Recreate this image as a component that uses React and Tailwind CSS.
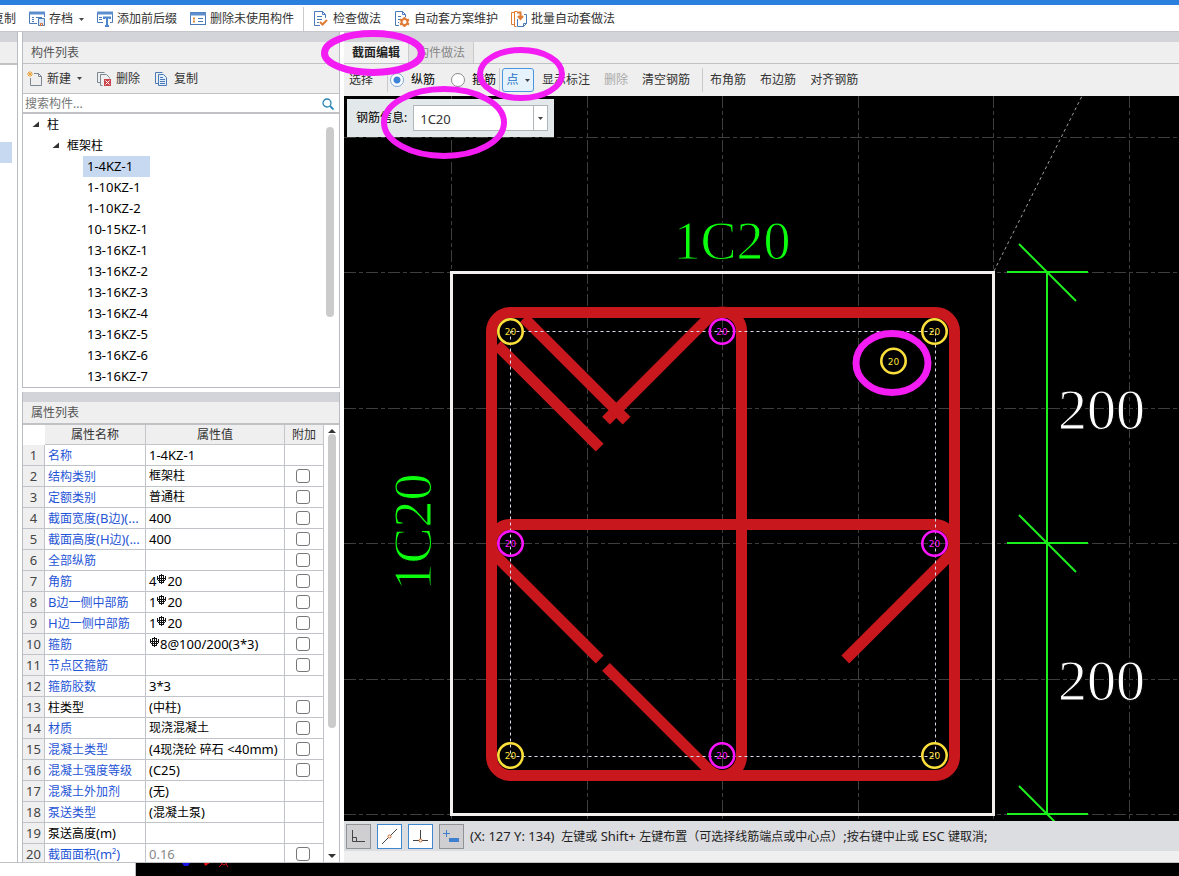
import { useState } from 'react'

const components = [
  '1-4KZ-1', '1-10KZ-1', '1-10KZ-2', '10-15KZ-1', '13-16KZ-1', '13-16KZ-2',
  '13-16KZ-3', '13-16KZ-4', '13-16KZ-5', '13-16KZ-6', '13-16KZ-7',
]

// "#" in a value stands for the rebar grade sign
const properties = [
  { name: '名称', value: '1-4KZ-1' },
  { name: '结构类别', value: '框架柱', extra: true },
  { name: '定额类别', value: '普通柱', extra: true },
  { name: '截面宽度(B边)(...', value: '400', extra: true },
  { name: '截面高度(H边)(...', value: '400', extra: true },
  { name: '全部纵筋', value: '', extra: true },
  { name: '角筋', value: '4#20', extra: true },
  { name: 'B边一侧中部筋', value: '1#20', extra: true },
  { name: 'H边一侧中部筋', value: '1#20', extra: true },
  { name: '箍筋', value: '#8@100/200(3*3)', extra: true },
  { name: '节点区箍筋', value: '', extra: true },
  { name: '箍筋胶数', value: '3*3' },
  { name: '柱类型', value: '(中柱)', extra: true, plain: true },
  { name: '材质', value: '现浇混凝土', extra: true },
  { name: '混凝土类型', value: '(4现浇砼 碎石 <40mm)', extra: true },
  { name: '混凝土强度等级', value: '(C25)', extra: true },
  { name: '混凝土外加剂', value: '(无)' },
  { name: '泵送类型', value: '(混凝土泵)' },
  { name: '泵送高度(m)', value: '', plain: true },
  { name: '截面面积(m²)', value: '0.16', extra: true, muted: true },
]

function GradeSign() {
  return (
    <svg width="11" height="12" viewBox="0 0 11 12" className="inline-block align-baseline" fill="none" stroke="#111" shapeRendering="crispEdges">
      <path d="M5.500 0V10M3 1.500H8M1.500 2V6M9.500 2V6M2 6.500H9M3.500 2V9M7.500 2V9M1 4.500H10M3 8.500H8" />
    </svg>
  )
}

// Latin runs are set one size larger than the Chinese ones
function Mixed({ children }) {
  return children.split(/(#|[\x20-\x22\x24-\x7e]+)/).map((part, i) => {
    if (part === '#') return <GradeSign key={i} />
    if (i % 2) return <span key={i} className="text-[13px] whitespace-pre">{part}</span>
    return part
  })
}

function Caret() {
  return (
    <svg width="5" height="3" viewBox="0 0 5 3" className="ml-[2px]">
      <path d="M0 0H5L2.5 3Z" fill="#444" />
    </svg>
  )
}

function Sep({ className }) {
  return <span className={`w-px h-6 bg-[#c8cacd] ${className}`} />
}

function Icon({ children }) {
  return (
    <svg width="16" height="16" viewBox="0 0 16 16" fill="none" stroke="#4a7ab8" className="shrink-0">
      {children}
    </svg>
  )
}

const SaveIcon = () => (
  <Icon>
    <path d="M.5 1V12.500H8M15.500 1V6" />
    <path d="M0 2H16" stroke="#5d8fce" strokeWidth="3" />
    <path d="M3 6.500H5M3 8.500H5M3 10.500H5M7 6.500H13" />
    <path d="M9.500 7.500H15.500V14.500H9.500Z" fill="#dce9f7" />
    <path d="M11.500 15V12.500H13.500V15" stroke="#e0703a" />
  </Icon>
)
const AffixIcon = () => (
  <Icon>
    <path d="M.5 1V11.500H6M15.500 1V11.500H13" />
    <path d="M0 2H16" stroke="#5d8fce" strokeWidth="3" />
    <path d="M2 6.500H5M2 8.500H5" />
    <path d="M7 8V6.500H13V8M10 6V14M8 15H12" strokeWidth="2" stroke="#4c86cc" />
  </Icon>
)
const UnusedIcon = () => (
  <Icon>
    <rect x=".5" y="1.500" width="15" height="12" />
    <path d="M0 3H16" stroke="#5d8fce" strokeWidth="3" />
    <path d="M3 7.500H5M3 10.500H5" stroke="#e08a3a" strokeWidth="2" />
    <path d="M8 7.500H13M8 10.500H13" />
  </Icon>
)
const CheckIcon = () => (
  <Icon>
    <path d="M7 14.500H1.500V.5H9.500L12.500 3.500V7M9.500 .5V3.500H12.500" />
    <path d="M4 5.500H9M4 8.500H9M4 11.500H6" />
    <path d="M7 11L9.500 13.500L14 9" stroke="#e07b35" strokeWidth="2" />
  </Icon>
)
const SchemeIcon = () => (
  <Icon>
    <path d="M5 14.500H1.500V.5H8.500L11.500 3.500V6M8.500 .5V3.500H11.500M4 5.500H7M4 8.500H6M4 11.500H5" />
    <circle cx="10.500" cy="11" r="3" stroke="#e07b35" strokeWidth="2" />
    <path d="M10.500 6V8M10.500 14V16M6 8.500L8 9.500M13 12.500L15 13.500M15 8.500L13 9.500M8 12.500L6 13.500" stroke="#e07b35" strokeWidth="2" />
  </Icon>
)
const BatchIcon = () => (
  <Icon>
    <path d="M3 13.500H.5V1.500H3M5.500 15.500H3.500V.500H6" stroke="#e07b35" />
    <path d="M6.500 8V15.500H12.500L15.500 12.500V3.500H13M12.500 15.500V12.500H15.500" />
    <path d="M6 1.500H9.500V7M7 5L9.500 8L12 5" stroke="#e07b35" strokeWidth="2" />
  </Icon>
)
const NewIcon = () => (
  <Icon>
    <path d="M3.500 7V14.500H14.500V5.500L11.500 2.500H7M11.500 2.500V5.500H14.500" stroke="#7d8791" />
    <path d="M3 0V6M0 3H6M1 1L5 5M5 1L1 5" stroke="#eda23a" />
  </Icon>
)
const DeleteIcon = () => (
  <Icon>
    <path d="M4 11.500H1.500V1.500H8.500M6.500 14.500H4.500V3.500H10.500L13.500 6.500V7.500" stroke="#7d8791" />
    <rect x="8" y="8" width="7" height="7" fill="#c9454b" stroke="none" />
    <path d="M9.500 9.500L13.500 13.500M13.500 9.500L9.500 13.500" stroke="#fff" />
  </Icon>
)
const CopyIcon = () => (
  <Icon>
    <path d="M4 12.500H1.500V1.500H8.500" />
    <path d="M4.500 3.500H9.500L12.500 6.500V14.500H4.500Z" fill="#e3eefb" />
    <path d="M6 6.500H9M6 8.500H11M6 10.500H11M6 12.500H11" />
  </Icon>
)

function ToolButton({ icon, caret, children, disabled, className = 'text-[#333]' }) {
  return (
    <button type="button" disabled={disabled} className={`flex items-center gap-1 whitespace-nowrap ${className}`}>
      {icon}
      {children}
      {caret && <Caret />}
    </button>
  )
}

function TopToolbar() {
  return (
    <header className="border-t-[5px] border-[#2b80de] bg-white shrink-0">
      <div className="h-[27px] pt-[2px] flex items-center gap-[13px] border-b border-[#c5c7cc] overflow-hidden">
        <ToolButton className="-ml-2 text-[#333]">复制</ToolButton>
        <ToolButton icon={<SaveIcon />} caret>存档</ToolButton>
        <ToolButton icon={<AffixIcon />}>添加前后缀</ToolButton>
        <ToolButton icon={<UnusedIcon />}>删除未使用构件</ToolButton>
        <Sep className="-mx-1" />
        <ToolButton icon={<CheckIcon />}>检查做法</ToolButton>
        <ToolButton icon={<SchemeIcon />}>自动套方案维护</ToolButton>
        <ToolButton icon={<BatchIcon />}>批量自动套做法</ToolButton>
      </div>
    </header>
  )
}

function Expander() {
  return (
    <svg width="8" height="7" viewBox="0 0 8 7">
      <path d="M7 .5V6H.5Z" fill="#333" />
    </svg>
  )
}

function ComponentList() {
  const [selected, setSelected] = useState('1-4KZ-1')

  return (
    <section className="h-[356px] shrink-0 flex flex-col border border-t-0 border-[#b9bcc2]">
      <div className="h-[10px] bg-[#d2d4da]" />
      <h2 className="h-[22px] px-2 pt-px flex items-center bg-[#efefef] border-b border-[#c0c2c6] text-[#555]">构件列表</h2>
      <div className="h-[30px] px-1 flex items-center gap-[14px] bg-[#efefef] border-b border-[#c0c2c6]">
        <ToolButton icon={<NewIcon />} caret>新建</ToolButton>
        <ToolButton icon={<DeleteIcon />}>删除</ToolButton>
        <ToolButton icon={<CopyIcon />}>复制</ToolButton>
      </div>
      <div className="h-5 pt-px flex items-center pl-[2px] pr-[5px] border-b-2 border-[#c0c2c6]">
        <input type="text" aria-label="搜索构件" placeholder="搜索构件..." className="flex-1 min-w-0 outline-none placeholder:text-[#777]" />
        <svg width="12" height="12" viewBox="0 0 12 12" fill="none" stroke="#2a86b8">
          <circle cx="5" cy="5" r="4" strokeWidth="1.3" />
          <path d="M8 8L11.500 11.500" strokeWidth="1.8" />
        </svg>
      </div>
      <div className="flex-1 min-h-0 flex justify-between overflow-hidden">
        <ul className="leading-[21px] text-black">
          <li>
            <div className="pl-[9px] flex items-center gap-[7px]"><Expander />柱</div>
            <ul>
              <li>
                <div className="pl-[29px] flex items-center gap-[7px]"><Expander />框架柱</div>
                <ul className="pl-[60px]">
                  {components.map((name) => (
                    <li key={name}>
                      <button
                        type="button"
                        onClick={() => setSelected(name)}
                        className={`block h-[21px] min-w-[67px] px-1 text-left text-[13px] ${name === selected ? 'bg-[#c7d9f0]' : ''}`}
                      >
                        {name}
                      </button>
                    </li>
                  ))}
                </ul>
              </li>
            </ul>
          </li>
        </ul>
        <div className="w-2 h-[190px] mt-[13px] mr-[5px] rounded-full bg-[#cbcbcb]" />
      </div>
    </section>
  )
}

function PropertyList() {
  return (
    <section className="flex-1 min-h-0 flex flex-col border-x border-[#b9bcc2]">
      <div className="h-[10px] shrink-0 bg-[#d2d4da]" />
      <h2 className="h-[23px] shrink-0 px-2 flex items-center bg-[#efefef] border-b-2 border-[#c0c2c6] text-[#555]">属性列表</h2>
      <div className="flex-1 min-h-0 flex overflow-hidden">
        <table className="w-[301px] table-fixed border-separate border-spacing-0 self-start">
          <colgroup>
            <col className="w-[22px]" />
            <col className="w-[101px]" />
            <col className="w-[139px]" />
            <col className="w-[39px]" />
          </colgroup>
          <thead>
            <tr className="h-5 text-[#333]">
              <td className="p-0" />
              <th className="p-0 pt-px font-normal bg-[#efefef] border-r border-b border-[#c4c6c9]">属性名称</th>
              <th className="p-0 pt-px font-normal bg-[#efefef] border-r border-b border-[#c4c6c9]">属性值</th>
              <th className="p-0 pt-px font-normal bg-[#efefef] border-r border-b border-[#c4c6c9]">附加</th>
            </tr>
          </thead>
          <tbody>
            {properties.map((row, i) => (
              <tr key={row.name} className="h-[21px]">
                <td className="p-0 text-center text-[13px] text-[#444] bg-[#efefef] border-r border-b border-[#c0c4c8]">{i + 1}</td>
                <td className={`p-0 pt-px pl-[3px] whitespace-nowrap overflow-hidden border-r border-b border-[#c0c4c8] ${row.plain ? 'text-black' : 'text-[#1f55d6]'}`}>
                  <Mixed>{row.name}</Mixed>
                </td>
                <td className={`p-0 pl-[3px] whitespace-nowrap overflow-hidden border-r border-b border-[#c0c4c8] ${row.muted ? 'text-[#888]' : 'text-black'}`}>
                  <Mixed>{row.value}</Mixed>
                </td>
                <td className="p-0 pr-[2px] border-r border-b border-[#c0c4c8]">
                  {row.extra && (
                    <input
                      type="checkbox"
                      aria-label={row.name}
                      className="block mx-auto size-[14px] appearance-none rounded-[3px] border border-[#777] bg-white checked:bg-[#2b80de]"
                    />
                  )}
                </td>
              </tr>
            ))}
          </tbody>
        </table>
        <div className="flex-1 flex flex-col items-center justify-between py-1">
          <svg width="8" height="4" viewBox="0 0 8 4"><path d="M0 4H8L4 0Z" fill="#333" /></svg>
          <div className="w-2 h-[294px] mt-px mb-auto rounded-full bg-[#cbcbcb]" />
          <svg width="8" height="4" viewBox="0 0 8 4"><path d="M0 0H8L4 4Z" fill="#333" /></svg>
        </div>
      </div>
    </section>
  )
}

function EditorToolbar() {
  const [kind, setKind] = useState('纵筋')

  return (
    <div className="h-8 shrink-0 pl-[5px] flex items-center gap-[14px] bg-[#efefef] text-[#222]">
      <ToolButton>选择</ToolButton>
      <Sep className="-mr-3" />
      <div className="flex gap-4">
        {['纵筋', '箍筋'].map((name) => (
          <label key={name} className="flex items-center gap-[7px] whitespace-nowrap text-black">
            <input
              type="radio"
              name="kind"
              checked={kind === name}
              onChange={() => setKind(name)}
              className="size-[14px] appearance-none rounded-full border border-[#8a8d91] bg-white checked:border-[#7aa7d8] checked:bg-[radial-gradient(circle,#3d84d6_3px,#fff_4px)]"
            />
            {name}
          </label>
        ))}
      </div>
      <Sep className="-ml-[11px] -mr-3" />
      <button type="button" className="w-8 h-6 -mr-[6px] shrink-0 flex items-center justify-center gap-1 rounded-[3px] border border-[#4a96dc] bg-[#e6f2fc] text-[#2273c8]">
        点
        <Caret />
      </button>
      <ToolButton>显示标注</ToolButton>
      <ToolButton disabled className="text-[#aaa]">删除</ToolButton>
      <ToolButton>清空钢筋</ToolButton>
      <Sep className="-ml-[2px] -mr-[7px]" />
      <ToolButton>布角筋</ToolButton>
      <ToolButton>布边筋</ToolButton>
      <ToolButton>对齐钢筋</ToolButton>
    </div>
  )
}

function Bar({ x, y, color }) {
  return (
    <g>
      <circle cx={x} cy={y} r="12.2" fill="none" stroke={color} strokeWidth="2.600" />
      <text x={x} y={y + 3.5} fill={color} fontSize="9" textAnchor="middle" fontFamily="DejaVu Sans, sans-serif">20</text>
    </g>
  )
}

const YELLOW = '#fbe03c'
const MAGENTA = '#ff14ff'

function SectionDrawing() {
  return (
    <svg viewBox="344 96 835 725" preserveAspectRatio="xMinYMin slice" className="block w-full h-full" fill="none">
      {/* axis grid */}
      <g stroke="#3e3e3e" strokeDasharray="12 3 4 3">
        {[451.5, 587.5, 722.5, 858.5, 993.5, 1129.5].map((x) => <path key={x} d={`M${x} 96V821`} />)}
        {[137.5, 272.5, 408.5, 543.5, 679.5, 814.5].map((y) => <path key={y} d={`M344 ${y}H1179`} />)}
      </g>
      <path d="M994 271L1082 96" stroke="#a0a0a0" strokeDasharray="3 3" />
      <rect x="451.5" y="272.5" width="542" height="542" stroke="#f4f0f0" strokeWidth="3" />

      {/* stirrups and their hooks */}
      <g stroke="#c8181e" strokeWidth="11">
        <rect x="491.5" y="312.5" width="463" height="463" rx="19" />
        <path d="M606 420.600L708.600 318A19 19 0 0 1 741.500 331.500V756A19 19 0 0 1 708.600 769.400L606 666.800" />
        <path d="M599.700 659.500L497.100 557A19 19 0 0 1 510.500 524.500H934.500A19 19 0 0 1 948 557L845.300 659.500" />
        <path d="M497.100 345L599.700 447.600M524 318L626.600 420.600" />
      </g>
      <rect x="510.5" y="331.5" width="425" height="425" stroke="#dcdcec" strokeDasharray="3 3" />

      <Bar x={510.5} y={331.5} color={YELLOW} />
      <Bar x={934.5} y={331.5} color={YELLOW} />
      <Bar x={510.5} y={755.5} color={YELLOW} />
      <Bar x={934.5} y={755.5} color={YELLOW} />
      <Bar x={893.5} y={361} color={YELLOW} />
      <Bar x={722} y={331.5} color={MAGENTA} />
      <Bar x={722} y={755.5} color={MAGENTA} />
      <Bar x={510.5} y={543.5} color={MAGENTA} />
      <Bar x={934.5} y={543.5} color={MAGENTA} />

      {/* dimension line */}
      <g stroke="#1cf01c" strokeWidth="2">
        <path d="M1047 272V815" />
        {[272, 543, 814].map((y) => <path key={y} d={`M1007 ${y}H1088M1019 ${y - 28}L1076 ${y + 29}`} />)}
      </g>
      {/* the black outline keeps the big figures thin */}
      <g fontFamily="Liberation Serif, serif" stroke="#000">
        <g fontSize="58" fill="#fff">
          <text x="1058" y="429">200</text>
          <text x="1058" y="700">200</text>
        </g>
        <g fontSize="54" fill="#0cff0c" textAnchor="middle">
          <text x="732" y="259">1C20</text>
          <text transform="translate(431 532) rotate(-90)">1C20</text>
        </g>
      </g>
    </svg>
  )
}

function RebarInfo() {
  return (
    <div className="absolute left-[3px] top-[3px] w-[207px] h-[38px] pl-[9px] pr-[6px] flex items-center gap-[6px] bg-[#e3e9ea] text-black">
      <label htmlFor="rebar" className="whitespace-nowrap">钢筋信息:</label>
      <div className="flex-1 min-w-0 h-[26px] flex border border-[#b0b5ba] bg-white">
        <input id="rebar" type="text" defaultValue="1C20" className="flex-1 min-w-0 px-[6px] pt-px text-[13px] text-[#333] outline-none" />
        <button type="button" aria-label="展开" className="w-[14px] flex items-center justify-center pr-[2px] border-l border-[#b0b5ba]">
          <Caret />
        </button>
      </div>
    </div>
  )
}

function SnapButton({ label, active, children }) {
  return (
    <button
      type="button"
      aria-label={label}
      className={`size-[25px] shrink-0 flex items-center justify-center border ${active ? 'bg-white border-[#3f87cf]' : 'bg-[#cfcfd2] border-[#909296]'}`}
    >
      <svg width="17" height="17" viewBox="0 0 17 17" fill="none" stroke="#444">{children}</svg>
    </button>
  )
}

function StatusBar() {
  return (
    <footer className="shrink-0 border-b-[11px] border-[#efefef]">
      <div className="h-[30px] pl-[2px] flex items-center gap-[6px] bg-[#dcdde0] text-[#222] whitespace-nowrap overflow-hidden">
        <SnapButton label="正交">
          <path d="M2.500 2V13.500H15M2.500 9.500H6.500V13.500" />
        </SnapButton>
        <SnapButton label="最近点" active>
          <path d="M1 16L16 1" />
          <circle cx="8.5" cy="8.500" r="1.500" stroke="#c86428" fill="#fff" />
        </SnapButton>
        <SnapButton label="垂足" active>
          <path d="M8.500 2V12M1 12.500H16" />
          <circle cx="8.500" cy="12.500" r="1.500" stroke="#c86428" fill="#fff" />
        </SnapButton>
        <SnapButton label="动态输入">
          <path d="M3.500 2V9M0 5.500H7" stroke="#3f7fd0" />
          <rect x="6" y="10" width="10" height="4" fill="#3f7fd0" stroke="none" />
        </SnapButton>
        <p><Mixed>(X: 127 Y: 134)  左键或 Shift+ 左键布置（可选择线筋端点或中心点）;按右键中止或 ESC 键取消;</Mixed></p>
      </div>
    </footer>
  )
}

// hand-drawn rings that call out the steps
function Callouts() {
  return (
    <svg className="absolute left-0 top-0 w-full h-full pointer-events-none" fill="none" stroke="#f31cf3">
      <ellipse cx="373" cy="53" rx="48.500" ry="19.500" strokeWidth="7" />
      <ellipse cx="521" cy="74" rx="41" ry="24" strokeWidth="6" />
      <ellipse cx="444" cy="122.500" rx="60" ry="33.500" strokeWidth="6" />
      <ellipse cx="892" cy="363" rx="36" ry="29.500" strokeWidth="7" />
    </svg>
  )
}

function App() {
  return (
    <div className="relative h-screen flex flex-col overflow-hidden bg-white text-[12px] leading-4 font-['Noto_Sans','Noto_Sans_CJK_SC',sans-serif]">
      <TopToolbar />
      <main className="flex-1 min-h-0 flex gap-1 border-b border-[#c0c2c6]">
        <aside className="w-[18px] shrink-0 border-r border-[#b9bcc2]">
          <div className="h-[10px] bg-[#d2d4da]" />
          <div className="h-[23px] bg-[#efefef] border-b-2 border-[#c0c2c6]" />
          <div className="w-3 h-[21px] mt-[77px] bg-[#c7d9f0]" />
        </aside>
        <div className="w-[318px] shrink-0 flex flex-col gap-1">
          <ComponentList />
          <PropertyList />
        </div>
        <div className="flex-1 min-w-0 flex flex-col">
          <div className="h-[10px] shrink-0 bg-[#d2d4da]" />
          <div role="tablist" className="h-[22px] shrink-0 flex bg-[#efefef] border-b border-[#c0c2c6]">
            <button type="button" role="tab" aria-selected="true" className="px-2 pt-px font-bold text-[#222] bg-[#f3f3f3]">截面编辑</button>
            <button type="button" role="tab" aria-selected="false" className="px-2 pt-px text-[#888] bg-[#e4e4e5] border-x border-[#c8cacd]">构件做法</button>
          </div>
          <EditorToolbar />
          <div className="relative flex-1 min-h-0 bg-black overflow-hidden">
            <SectionDrawing />
            <RebarInfo />
          </div>
          <StatusBar />
        </div>
      </main>
      <div className="h-[13px] shrink-0 flex bg-black">
        <div className="w-[136px] bg-white border-r border-[#b9bcc2]" />
        <svg width="100" height="6" viewBox="0 0 100 6" fill="none">
          <path d="M46 0H54L52 3H48Z" fill="#1414e6" />
          <path d="M68 0H74L69 3Z" fill="#e61414" />
          <path d="M85 0L88 2L91 0M83 4L86 1M90 1L92 4" stroke="#d01414" />
        </svg>
      </div>
      <Callouts />
    </div>
  )
}

export default App
